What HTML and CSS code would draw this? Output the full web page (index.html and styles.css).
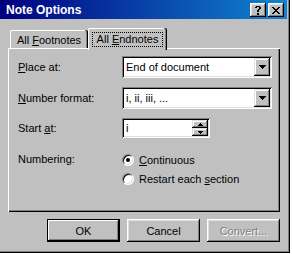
FILE: index.html
```html
<!DOCTYPE html>
<html>
<head>
<meta charset="utf-8">
<link rel="stylesheet" href="styles.css">
</head>
<body>
<div class="window">
  <div class="titlebar">
    <span class="title">Note Options</span>
    <div class="tb-buttons">
      <span class="tb-btn"><svg width="6" height="9" viewBox="0 0 6 9" shape-rendering="crispEdges"><path d="M1 0h4v1h1v2h-1v1h-1v2h-2v-2h1v-1h1v-2h-2v1h-2v-1h1z M2 7h2v2h-2z" fill="#000"/></svg></span>
      <span class="tb-btn"><svg width="8" height="7" viewBox="0 0 8 7" shape-rendering="crispEdges"><path d="M0 0h2v1h1v1h2v-1h1v-1h2v1h-1v1h-1v1h-1v1h1v1h1v1h1v1h-2v-1h-1v-1h-2v1h-1v1h-2v-1h1v-1h1v-1h1v-1h-1v-1h-1v-1h-1z" fill="#000"/></svg></span>
    </div>
  </div>
  <div class="content">
    <div class="tabs">
      <div class="tab"><span>All <u>F</u>ootnotes</span></div>
      <div class="tab active"><span class="focus">All <u>E</u>ndnotes</span></div>
    </div>
    <div class="panel">
      <div class="row">
        <span class="label"><u>P</u>lace at:</span>
        <div class="combo">
          <span class="val">End of document</span>
          <span class="drop"><svg width="7" height="4" viewBox="0 0 7 4" shape-rendering="crispEdges"><path d="M0 0h7v1h-1v1h-1v1h-1v1h-1v-1h-1v-1h-1v-1h-1z" fill="#000"/></svg></span>
        </div>
      </div>
      <div class="row">
        <span class="label"><u>N</u>umber format:</span>
        <div class="combo">
          <span class="val">i, ii, iii, ...</span>
          <span class="drop"><svg width="7" height="4" viewBox="0 0 7 4" shape-rendering="crispEdges"><path d="M0 0h7v1h-1v1h-1v1h-1v1h-1v-1h-1v-1h-1v-1h-1z" fill="#000"/></svg></span>
        </div>
      </div>
      <div class="row">
        <span class="label">Start <u>a</u>t:</span>
        <div class="spin">
          <span class="val">i</span>
          <span class="spin-btns">
            <span class="spin-btn"><svg width="5" height="3" viewBox="0 0 5 3" shape-rendering="crispEdges"><path d="M2 0h1v1h1v1h1v1h-5v-1h1v-1h1z" fill="#000"/></svg></span>
            <span class="spin-btn"><svg width="5" height="3" viewBox="0 0 5 3" shape-rendering="crispEdges"><path d="M0 0h5v1h-1v1h-1v1h-1v-1h-1v-1h-1z" fill="#000"/></svg></span>
          </span>
        </div>
      </div>
      <div class="row radio-row">
        <span class="label">Numbering:</span>
        <div class="radios">
          <div class="opt"><span class="radio checked"><span class="dot"></span></span><span><u>C</u>ontinuous</span></div>
          <div class="opt"><span class="radio"></span><span>Restart each <u>s</u>ection</span></div>
        </div>
      </div>
    </div>
    <div class="buttons">
      <div class="btn default"><span>OK</span></div>
      <div class="btn"><span>Cancel</span></div>
      <div class="btn disabled"><span>Convert...</span></div>
    </div>
  </div>
</div>
</body>
</html>
```
FILE: styles.css
```css
* { box-sizing: border-box; }
body {
  margin: 0;
  background: #fff;
  font-family: "Liberation Sans", Arial, sans-serif;
  font-size: 11px;
  color: #000;
}
.window {
  width: 290px;
  height: 253px;
  background: #c0c0c0;
  padding: 0 3px 3px 0;
  box-shadow: inset -1px -1px #000, inset -2px -2px #808080;
  display: flex;
  flex-direction: column;
}
.titlebar {
  height: 19px;
  flex: none;
  background: linear-gradient(to right, #000080, #1084d0);
  display: flex;
  align-items: center;
  padding: 1px 3px 0 6px;
}
.title {
  color: #fff;
  font-weight: bold;
  font-size: 12px;
  flex: 1;
}
.tb-buttons { display: flex; gap: 2px; }
.tb-btn {
  width: 16px;
  height: 14px;
  background: #c0c0c0;
  box-shadow: inset -1px -1px #000, inset 1px 1px #fff, inset -2px -2px #808080, inset 2px 2px #dfdfdf;
  display: flex;
  align-items: center;
  justify-content: center;
}
.tb-btn svg { display: block; }
.content {
  padding: 9px 7px 0 8px;
  display: flex;
  flex-direction: column;
}
.tabs {
  display: flex;
  align-items: flex-end;
  padding-left: 2px;
  height: 20px;
}
.tab {
  width: 78px;
  height: 18px;
  padding-top: 2px;
  display: flex;
  align-items: center;
  justify-content: center;
  border-radius: 2px 2px 0 0;
  box-shadow: inset -1px 0 #000, inset -2px 0 #808080, inset 1px 0 #fff, inset 0 1px #fff;
}
.tab.active {
  width: 79px;
  height: 22px;
  padding-top: 0;
  margin-bottom: -2px;
  position: relative;
  z-index: 1;
  background: #c0c0c0;
}
.focus {
  border: 1px dotted #000;
  padding: 0 4px;
  line-height: 13px;
}
.panel {
  height: 164px;
  flex: none;
  box-shadow: inset 1px 1px #fff, inset -1px -1px #000, inset -2px -2px #808080;
  padding: 8px 0 0 10px;
  display: flex;
  flex-direction: column;
  gap: 9px;
}
.row {
  display: flex;
  align-items: center;
}
.label { width: 104px; flex: none; }
.combo {
  width: 150px;
  height: 22px;
  background: #fff;
  box-shadow: inset 1px 1px #808080, inset -1px -1px #fff, inset 2px 2px #000, inset -2px -2px #dfdfdf;
  padding: 2px;
  display: flex;
  align-items: center;
}
.val { flex: 1; padding-left: 2px; }
.drop {
  width: 16px;
  height: 18px;
  background: #c0c0c0;
  box-shadow: inset -1px -1px #000, inset 1px 1px #dfdfdf, inset -2px -2px #808080, inset 2px 2px #fff;
  display: flex;
  align-items: center;
  justify-content: center;
}
.drop svg, .spin-btn svg { display: block; }
.spin {
  width: 88px;
  height: 20px;
  background: #fff;
  box-shadow: inset 1px 1px #808080, inset -1px -1px #fff, inset 2px 2px #000, inset -2px -2px #dfdfdf;
  padding: 2px;
  display: flex;
  align-items: center;
}
.spin-btns {
  display: flex;
  flex-direction: column;
  width: 16px;
  height: 16px;
}
.spin-btn {
  height: 8px;
  background: #c0c0c0;
  box-shadow: inset -1px -1px #000, inset 1px 1px #dfdfdf, inset -2px -2px #808080, inset 2px 2px #fff;
  display: flex;
  align-items: center;
  justify-content: center;
}
.radio-row {
  margin-top: 3px;
  align-items: flex-start;
}
.radio-row .label { line-height: 19px; }
.radios { display: flex; flex-direction: column; }
.opt {
  height: 19px;
  display: flex;
  align-items: center;
}
.radio {
  width: 12px;
  height: 12px;
  margin-right: 5px;
  border-radius: 50%;
  border: 1px solid;
  border-color: #808080 #fff #fff #808080;
  box-shadow: inset 1px 1px #000, inset -1px -1px #dfdfdf;
  background: #fff;
  display: flex;
  align-items: center;
  justify-content: center;
}
.dot {
  width: 4px;
  height: 4px;
  border-radius: 50%;
  background: #000;
}
.buttons {
  display: flex;
  justify-content: flex-end;
  gap: 7px;
  margin-top: 7px;
}
.btn {
  width: 73px;
  height: 23px;
  display: flex;
  align-items: center;
  justify-content: center;
  box-shadow: inset -1px -1px #000, inset 1px 1px #fff, inset -2px -2px #808080, inset 2px 2px #dfdfdf;
}
.btn.default {
  box-shadow: inset 0 0 0 1px #000, inset -2px -2px #000, inset 2px 2px #fff, inset -3px -3px #808080;
}
.btn.disabled {
  color: #808080;
  text-shadow: 1px 1px #fff;
}
```
